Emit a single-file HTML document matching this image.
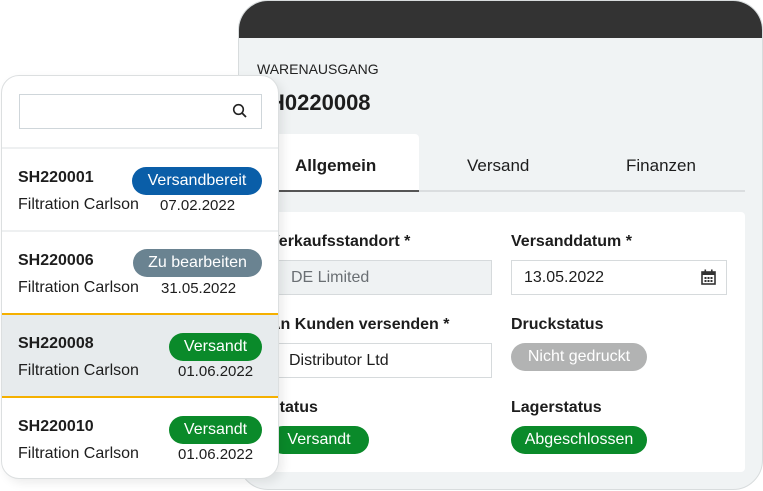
<!DOCTYPE html>
<html><head><style>
*{box-sizing:border-box;margin:0;padding:0}
body{width:763px;height:491px;background:#fff;position:relative;overflow:hidden;font-family:"Liberation Sans",sans-serif;color:#1d1d1d}
.abs{position:absolute}
#right{left:238px;top:0;width:525px;height:490px;background:#f0f3f4;border-radius:30px;overflow:hidden;border:1px solid #d8dcdd}
#hdr{left:0;top:0;width:525px;height:37px;background:#333}
.pill{position:absolute;height:28px;border-radius:14px;color:#fff;font-size:16px;line-height:28px;text-align:center}
.lbl{position:absolute;font-size:16px;font-weight:bold;color:#1d1d1d}
.inp{position:absolute;height:35px;border:1px solid #d6dadc;font-size:16px;line-height:33px;padding-left:12px}
#left{left:1px;top:75px;width:278px;height:404px;background:#fff;border:1px solid #dcdfe0;border-radius:18px;overflow:hidden;box-shadow:4px 4px 10px rgba(0,0,0,0.08)}
.row{position:absolute;left:0;width:277px;height:83px}
.row .id{position:absolute;left:16px;top:20px;font-size:16px;font-weight:bold}
.row .nm{position:absolute;left:16px;top:47px;font-size:16px}
.row .dt{position:absolute;font-size:15px;top:48px}
</style></head><body>
<div id="right" class="abs">
 <div id="hdr" class="abs"></div>
 <div class="abs" style="left:18px;top:60px;font-size:14px;color:#222">WARENAUSGANG</div>
 <div class="abs" style="left:30px;top:89px;font-size:22px;font-weight:bold">H0220008</div>
 <div class="abs" style="left:30px;top:133px;width:150px;height:57px;background:#fff;border-radius:4px 4px 0 0"></div>
 <div class="abs" style="left:30px;top:189px;width:476px;height:2px;background:#dadddf"></div>
 <div class="abs" style="left:30px;top:189px;width:150px;height:2px;background:#555"></div>
 <div class="abs" style="left:56px;top:155px;font-size:17px;font-weight:bold">Allgemein</div>
 <div class="abs" style="left:228px;top:155px;font-size:17px">Versand</div>
 <div class="abs" style="left:387px;top:155px;font-size:17px">Finanzen</div>
 <div class="abs" style="left:20px;top:211px;width:486px;height:260px;background:#fff;border-radius:4px"></div>
 <div class="lbl" style="left:30px;top:232px">Verkaufsstandort *</div>
 <div class="inp" style="left:30px;top:259px;width:223px;background:#eff2f3;color:#6a6f73;padding-left:21px">DE Limited</div>
 <div class="lbl" style="left:272px;top:232px">Versanddatum *</div>
 <div class="inp" style="left:272px;top:259px;width:216px;background:#fff">13.05.2022
  <svg style="position:absolute;right:10px;top:8px" width="15" height="16" viewBox="0 0 15 16"><rect x="1" y="3" width="13" height="12" fill="none" stroke="#333" stroke-width="1.6"/><rect x="1" y="3" width="13" height="3" fill="#333"/><rect x="3.5" y="0.5" width="1.6" height="4" fill="#333"/><rect x="10" y="0.5" width="1.6" height="4" fill="#333"/><g fill="#333"><rect x="3.5" y="8" width="2" height="2"/><rect x="6.5" y="8" width="2" height="2"/><rect x="9.5" y="8" width="2" height="2"/><rect x="3.5" y="11" width="2" height="2"/><rect x="6.5" y="11" width="2" height="2"/><rect x="9.5" y="11" width="2" height="2"/></g></svg></div>
 <div class="lbl" style="left:30px;top:315px">An Kunden versenden *</div>
 <div class="inp" style="left:30px;top:342px;width:223px;background:#fff;padding-left:19px">Distributor Ltd</div>
 <div class="lbl" style="left:272px;top:315px">Druckstatus</div>
 <div class="pill" style="left:272px;top:342px;width:136px;background:#b2b3b3">Nicht gedruckt</div>
 <div class="lbl" style="left:30px;top:398px">Status</div>
 <div class="pill" style="left:30px;top:425px;width:100px;background:#0a8a2a">Versandt</div>
 <div class="lbl" style="left:272px;top:398px">Lagerstatus</div>
 <div class="pill" style="left:272px;top:425px;width:136px;background:#0a8a2a">Abgeschlossen</div>
</div>
<div id="left" class="abs">
 <div class="abs" style="left:17px;top:18px;width:243px;height:35px;border:1px solid #cfd6da"></div>
 <svg class="abs" style="left:230px;top:27px" width="16" height="16" viewBox="0 0 16 16"><circle cx="6.5" cy="6.5" r="4.8" fill="none" stroke="#222" stroke-width="1.6"/><line x1="10" y1="10" x2="14" y2="14" stroke="#222" stroke-width="1.8"/></svg>
 <div class="abs" style="left:0;top:71px;width:278px;height:2px;background:#eef0f1"></div>
 <div class="row" style="top:73px">
  <div class="id">SH220001</div><div class="nm">Filtration Carlson</div>
  <div class="pill" style="left:130px;top:18px;width:130px;height:28px;background:#0a5ea8">Versandbereit</div>
  <div class="dt" style="left:158px">07.02.2022</div></div>
 <div class="abs" style="left:0;top:154px;width:278px;height:2px;background:#eef0f1"></div>
 <div class="row" style="top:156px">
  <div class="id">SH220006</div><div class="nm">Filtration Carlson</div>
  <div class="pill" style="left:131px;top:17px;width:129px;height:28px;background:#6a8391">Zu bearbeiten</div>
  <div class="dt" style="left:159px">31.05.2022</div></div>
 <div class="row" style="top:237px;height:85px;width:278px;background:#e7ebed;border-top:2px solid #f5b000;border-bottom:2px solid #f5b000">
  <div class="id">SH220008</div><div class="nm">Filtration Carlson</div>
  <div class="pill" style="left:167px;top:18px;width:93px;height:28px;background:#0a8a2a">Versandt</div>
  <div class="dt" style="left:176px">01.06.2022</div></div>
 <div class="row" style="top:322px">
  <div class="id">SH220010</div><div class="nm">Filtration Carlson</div>
  <div class="pill" style="left:167px;top:18px;width:93px;height:28px;background:#0a8a2a">Versandt</div>
  <div class="dt" style="left:176px">01.06.2022</div></div>
</div>
</body></html>
